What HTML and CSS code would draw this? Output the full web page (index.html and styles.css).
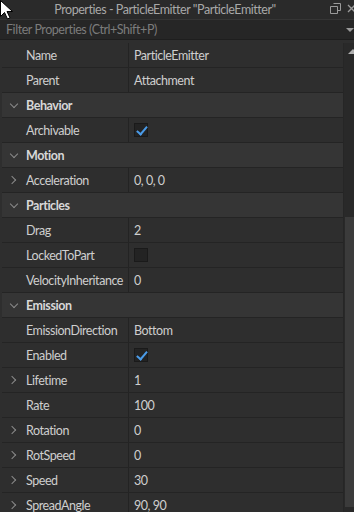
FILE: index.html
```html
<!DOCTYPE html>
<html>
<head>
    <meta name='viewport' content='width=device-width, initial-scale=1'>
    <link rel="stylesheet" href="styles.css">
</head>
<body>
<div class="titlebar">
    <span class="title">Properties - ParticleEmitter "ParticleEmitter"</span>
    <svg class="restore" width="11" height="11" viewBox="0 0 11 11"><path d="M3.5 0.5h7v7h-3M0.5 3.5h7v7h-7z" fill="none" stroke="#9a9a9a"/></svg>
    <svg class="close" width="8" height="9" viewBox="0 0 8 9"><path d="M1 1l7 7M8 1l-7 7" stroke="#9a9a9a" stroke-width="1.3"/></svg>
</div>
<div class="filter">
    <span>Filter Properties (Ctrl+Shift+P)</span>
    <span class="drop"></span>
</div>
<div class="main">
    <div class="grid">
        <div class="row"><span class="name">Name</span><span class="value">ParticleEmitter</span></div>
        <div class="row"><span class="name">Parent</span><span class="value">Attachment</span></div>
        <div class="row head"><span class="chev down"></span>Behavior</div>
        <div class="row"><span class="name">Archivable</span><span class="value"><span class="check on"></span></span></div>
        <div class="row head"><span class="chev down"></span>Motion</div>
        <div class="row"><span class="name"><span class="chev right"></span>Acceleration</span><span class="value">0, 0, 0</span></div>
        <div class="row head"><span class="chev down"></span>Particles</div>
        <div class="row"><span class="name">Drag</span><span class="value">2</span></div>
        <div class="row"><span class="name">LockedToPart</span><span class="value"><span class="check"></span></span></div>
        <div class="row"><span class="name">VelocityInheritance</span><span class="value">0</span></div>
        <div class="row head"><span class="chev down"></span>Emission</div>
        <div class="row"><span class="name">EmissionDirection</span><span class="value">Bottom</span></div>
        <div class="row"><span class="name">Enabled</span><span class="value"><span class="check on"></span></span></div>
        <div class="row"><span class="name"><span class="chev right"></span>Lifetime</span><span class="value">1</span></div>
        <div class="row"><span class="name">Rate</span><span class="value">100</span></div>
        <div class="row"><span class="name"><span class="chev right"></span>Rotation</span><span class="value">0</span></div>
        <div class="row"><span class="name"><span class="chev right"></span>RotSpeed</span><span class="value">0</span></div>
        <div class="row"><span class="name"><span class="chev right"></span>Speed</span><span class="value">30</span></div>
        <div class="row"><span class="name"><span class="chev right"></span>SpreadAngle</span><span class="value">90, 90</span></div>
    </div>
    <div class="scrollbar">
        <div class="arrow"></div>
        <div class="track"></div>
        <div class="thumb"></div>
    </div>
</div>
<svg class="cursor" width="13" height="20" viewBox="0 0 13 20"><path d="M0.5 0.5v16l4-4 3 6.5 2.5-1.2-3-6.3h5.5z" fill="#fff" stroke="#000"/></svg>
</body>
</html>
```

FILE: styles.css
```css
body {
    margin: 0;
    width: 354px;
    height: 512px;
    overflow: hidden;
    background: #2e2e2e;
    font-family: 'Lato', 'Noto Sans', sans-serif;
    font-size: 12.5px;
    letter-spacing: -0.45px;
    color: #cfcfcf;
    position: relative;
}

.titlebar {
    height: 19px;
    background: #2a2a2a;
    display: flex;
    align-items: center;
    justify-content: center;
    padding-right: 24px;
    position: relative;
    color: #a8a8a8;
}

.restore {
    position: absolute;
    right: 13px;
    top: 3px;
}

.close {
    position: absolute;
    right: -1px;
    top: 4px;
}

.filter {
    height: 19px;
    background: #262626;
    border-top: 1px solid #353535;
    border-bottom: 1px solid #1e1e1e;
    display: flex;
    align-items: center;
    padding-left: 6px;
    color: #7c7c7c;
    position: relative;
    margin-bottom: 3px;
}

.drop {
    position: absolute;
    right: 0;
    top: 8px;
    border-left: 4px solid transparent;
    border-right: 4px solid transparent;
    border-top: 4px solid #9a9a9a;
}

.main {
    display: flex;
}

.grid {
    flex: 1;
    padding-left: 2px;
    border-right: 1px solid #262626;
}

.row {
    height: 25px;
    box-sizing: border-box;
    border-bottom: 1px solid #242424;
    display: flex;
    align-items: center;
}

.name {
    width: 127px;
    height: 100%;
    box-sizing: border-box;
    padding-left: 24px;
    display: flex;
    align-items: center;
    position: relative;
    border-right: 1px solid #232323;
}

.value {
    padding-left: 5px;
    display: flex;
    align-items: center;
}

.head {
    background: #353535;
    font-weight: bold;
    color: #d8d8d8;
    padding-left: 24px;
    position: relative;
}

.chev {
    position: absolute;
    width: 5px;
    height: 5px;
    border-right: 1.5px solid #8a8a8a;
    border-bottom: 1.5px solid #8a8a8a;
}

.chev.down {
    left: 9px;
    top: 8px;
    transform: rotate(45deg);
}

.chev.right {
    left: 7px;
    top: 9px;
    transform: rotate(-45deg);
}

.check {
    width: 14px;
    height: 14px;
    box-sizing: border-box;
    background: #232323;
    border: 1px solid #1a1a1a;
    position: relative;
}

.check.on::after {
    content: '';
    position: absolute;
    left: 4px;
    top: 0;
    width: 4px;
    height: 9px;
    border-right: 2px solid #4a9be8;
    border-bottom: 2px solid #4a9be8;
    transform: rotate(40deg);
}

.scrollbar {
    width: 10px;
    display: flex;
    flex-direction: column;
    background: #292929;
}

.arrow {
    margin: 6px 0 0 4px;
    width: 0;
    border-left: 5px solid transparent;
    border-right: 5px solid transparent;
    border-bottom: 5px solid #b0b0b0;
}

.track {
    height: 163px;
}

.thumb {
    height: 290px;
    background: #3b3b3b;
    margin-left: 1px;
}

.cursor {
    position: absolute;
    left: 0;
    top: 0;
}
```
